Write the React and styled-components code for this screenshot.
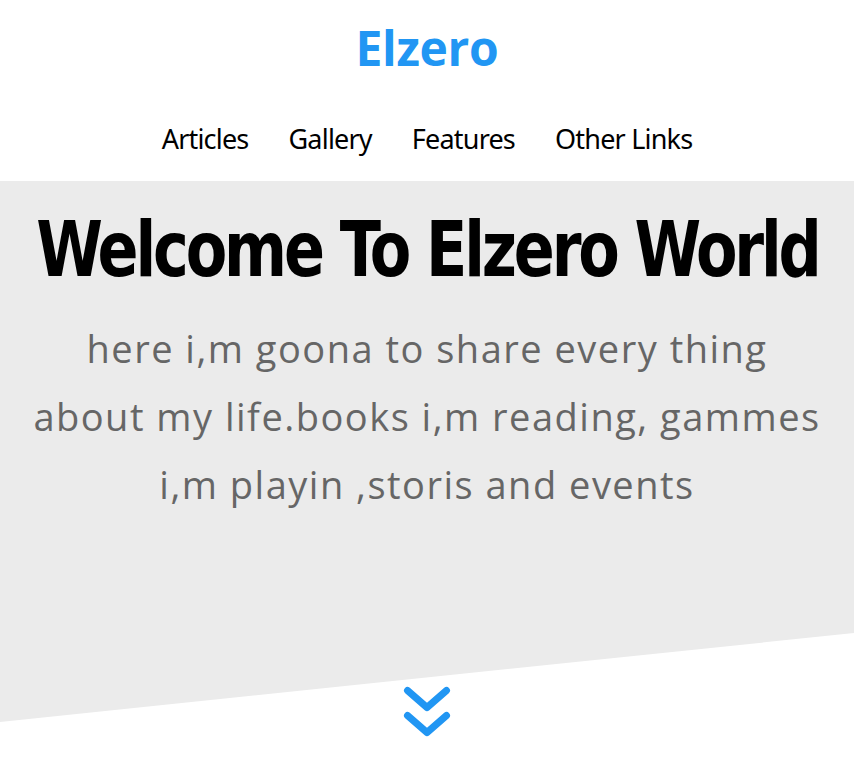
import React from "react";
import styled, { createGlobalStyle } from "styled-components";

const Global = createGlobalStyle`
  html, body { margin: 0; padding: 0; background: #fff; overflow-x: hidden; }
  body { font-family: "Open Sans", "Liberation Sans", sans-serif; }
  * { box-sizing: border-box; }
`;

const Header = styled.header`
  height: 181px;
  background: #fff;
  display: flex;
  flex-direction: column;
  align-items: center;
`;

const Logo = styled.a`
  margin-top: 12px;
  font-family: "Open Sans", sans-serif;
  font-weight: 700;
  font-size: 48px;
  line-height: 72px;
  color: #2196f3;
  text-decoration: none;
  letter-spacing: -0.3px;
`;

const Nav = styled.ul`
  list-style: none;
  margin: 38px 0 0;
  padding: 0;
  display: flex;
  justify-content: center;
  gap: 40px;
`;

const NavItem = styled.li`
  font-family: "Noto Sans", sans-serif;
  font-size: 27px;
  line-height: 34px;
  color: #000;
  letter-spacing: -0.8px;
`;

const Hero = styled.section`
  position: relative;
  isolation: isolate;
  display: flex;
  flex-direction: column;
  align-items: center;
  text-align: center;
  padding-top: 30px;
  overflow: hidden;
  &::before {
    content: "";
    position: absolute;
    left: 0;
    top: 0;
    width: 100%;
    height: 541px;
    background: #ebebeb;
    clip-path: polygon(0 0, 100% 0, 100% 83.55%, 0 100%);
    z-index: -1;
  }
`;

const Title = styled.h1`
  flex: none;
  width: max-content;
  margin: 0;
  font-family: "DejaVu Sans", sans-serif;
  font-weight: 700;
  font-size: 77px;
  line-height: 78px;
  letter-spacing: -4px;
  white-space: nowrap;
  color: #000;
  transform: scaleX(0.785);
  transform-origin: center;
`;

const Text = styled.p`
  margin: 25px 0 0;
  width: 790px;
  font-family: "Open Sans", sans-serif;
  font-size: 38px;
  line-height: 68px;
  letter-spacing: 1.5px;
  color: #666;
`;

const Arrow = styled.div`
  display: flex;
  justify-content: center;
  margin-top: 168px;
  padding-bottom: 28px;
`;

export default function App() {
  return (
    <>
      <Global />
      <Header>
        <Logo href="#">Elzero</Logo>
        <Nav>
          <NavItem>Articles</NavItem>
          <NavItem>Gallery</NavItem>
          <NavItem>Features</NavItem>
          <NavItem>Other Links</NavItem>
        </Nav>
      </Header>
      <Hero>
        <Title>Welcome To Elzero World</Title>
        <Text>
          here i,m goona to share every thing about my life.books i,m reading,
          gammes i,m playin ,storis and events
        </Text>
        <Arrow>
          <svg width="50" height="54" viewBox="0 0 50 54" fill="none">
            <path d="M5.5 4.5 L25 21.5 L44.5 4.5" stroke="#2196f3" strokeWidth="7" strokeLinecap="round" strokeLinejoin="round" />
            <path d="M5.5 29.5 L25 46.5 L44.5 29.5" stroke="#2196f3" strokeWidth="7" strokeLinecap="round" strokeLinejoin="round" />
          </svg>
        </Arrow>
      </Hero>
    </>
  );
}
